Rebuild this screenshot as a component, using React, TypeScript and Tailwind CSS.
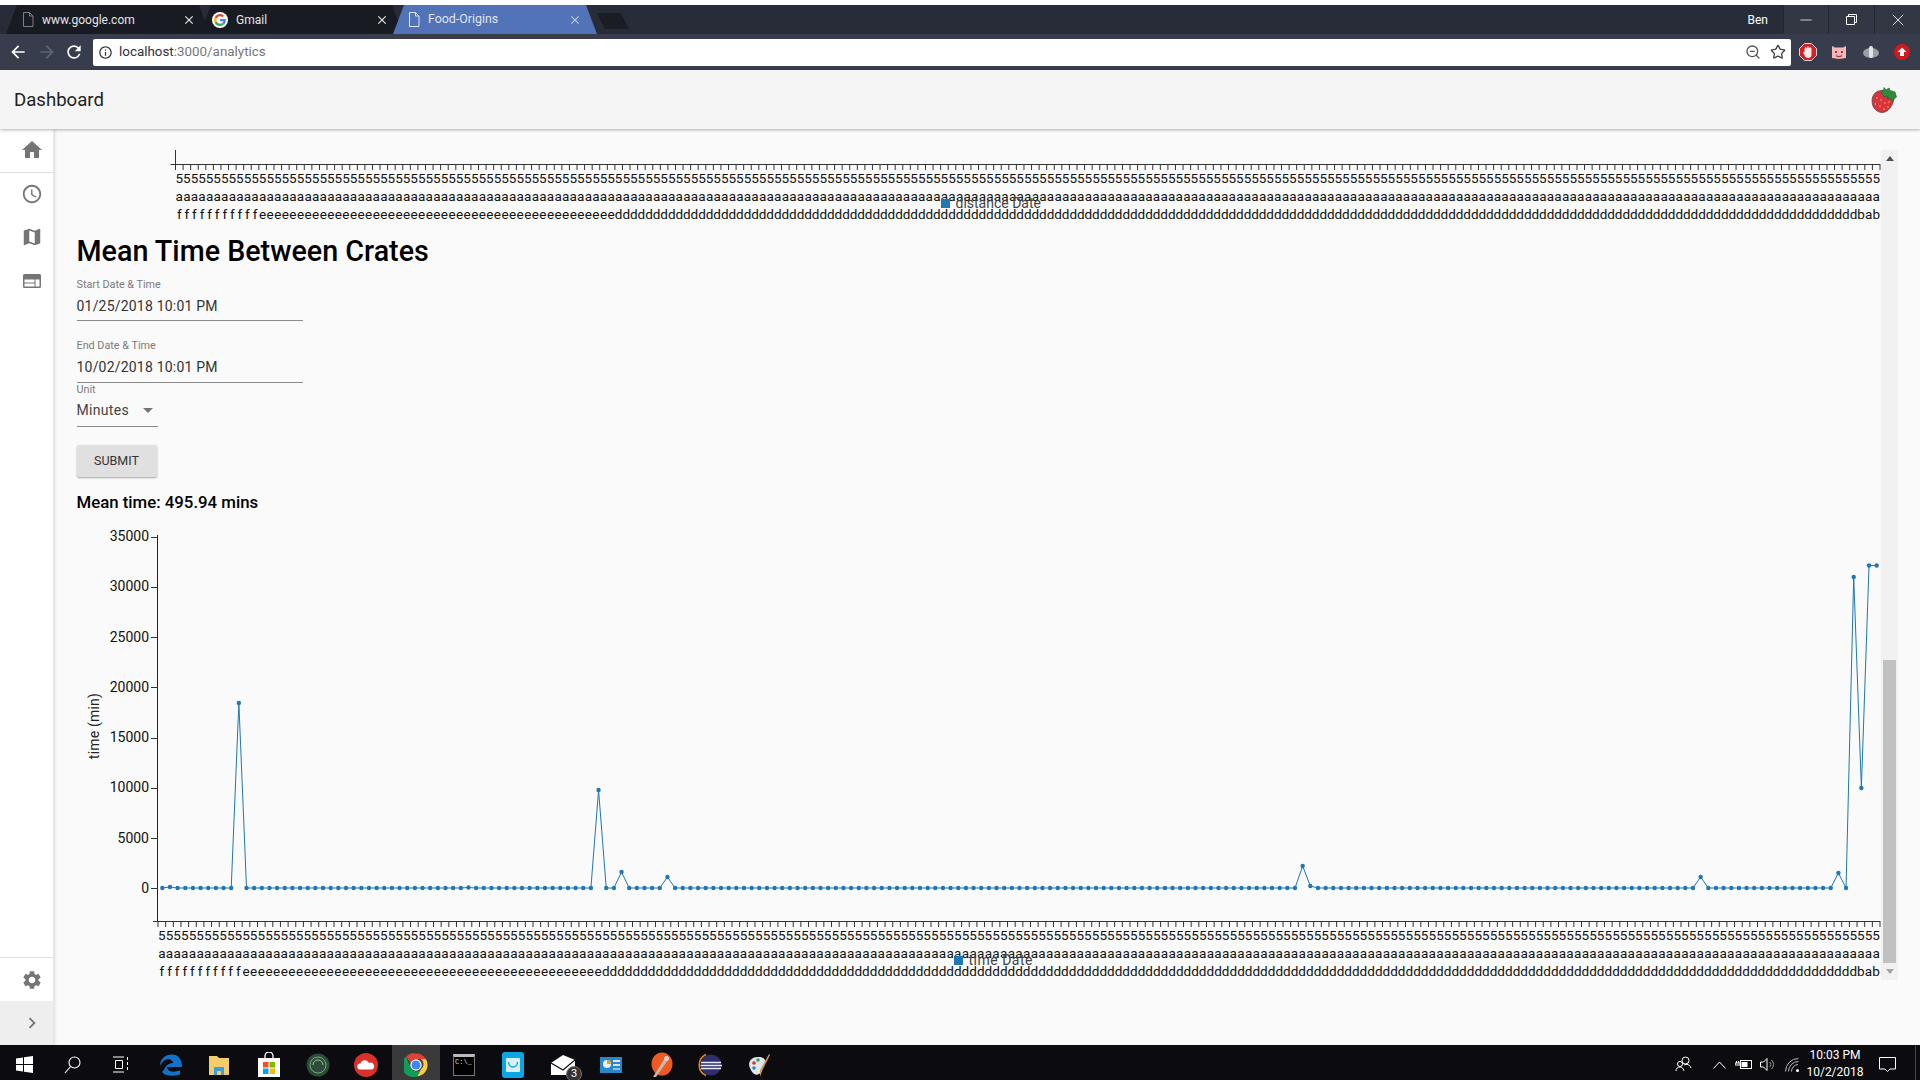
import React from "react";
import { MdHome, MdAccessTime, MdMap, MdSettings, MdChevronRight, MdArrowBack, MdArrowForward, MdRefresh, MdInfoOutline, MdClose } from "react-icons/md";
import { ZoomOut, Star, Minus, X } from "lucide-react";

const N = 225;
const row1 = "5".repeat(N);
const row2 = "a".repeat(N);
const row3 = "f".repeat(11) + "e".repeat(47) + "d".repeat(164) + "bab";

function XAxis({ x0, x1, y }: { x0: number; x1: number; y: number }) {
  const step = (x1 - x0) / N;
  const centers = Array.from({ length: N }, (_, i) => (x0 + step * (i + 0.5)).toFixed(2)).join(" ");
  let ticks = `M${x0 - 5} ${y + 0.5}H${x1}`;
  for (let i = 0; i <= N; i++) ticks += `M${(x0 + step * i).toFixed(2)} ${y}v6`;
  return (
    <g>
      <path d={ticks} stroke="#333" strokeWidth={1} fill="none" />
      <g fontSize={13.5} fill="#111" textAnchor="middle" fontFamily="Roboto, sans-serif">
        <text x={centers} y={y + 19}>{row1}</text>
        <text x={centers} y={y + 37}>{row2}</text>
        <text x={centers} y={y + 55}>{row3}</text>
      </g>
    </g>
  );
}

function Chart1() {
  return (
    <svg className="block w-[1827px] h-[82px] shrink-0" viewBox="54 150 1827 82">
      <path d="M175.5 150V165" stroke="#333" />
      <XAxis x0={175.5} x1={1880} y={164} />
      <rect x={941} y={199} width={9} height={9} fill="#1f77b4" />
      <text x={955.5} y={208} fontSize={14} fill="#444" fontFamily="Roboto, sans-serif">distance Date</text>
    </svg>
  );
}

const special: Record<number, number> = {
  1: 886, 10: 702, 40: 886.5, 57: 789, 60: 871, 66: 876, 149: 865, 150: 885, 201: 876, 219: 872,
  221: 576, 222: 787, 223: 564.5, 224: 564.5,
};

function Chart2() {
  const x0 = 158;
  const x1 = 1880;
  const step = (x1 - x0) / N;
  const pts = Array.from({ length: N }, (_, i) => [x0 + step * (i + 0.5) + 0.5, special[i] ?? 887]);
  const yTicks = [35000, 30000, 25000, 20000, 15000, 10000, 5000, 0];
  return (
    <svg className="block w-[1827px] h-[455px] shrink-0" viewBox="54 525 1827 455">
      <path d={`M157.5 534V921`} stroke="#222" />
      {yTicks.map((v, i) => {
        const y = 535.5 + i * 50.25;
        return (
          <g key={v}>
            <path d={`M151 ${Math.round(y) + 0.5}H158`} stroke="#333" />
            <text x={149} y={y + 4.5} fontSize={14} textAnchor="end" fill="#111" fontFamily="Roboto, sans-serif">{v}</text>
          </g>
        );
      })}
      <text transform="translate(99 725) rotate(-90)" fontSize={14} textAnchor="middle" fill="#222" letterSpacing="0.2" fontFamily="Roboto, sans-serif">time (min)</text>
      <XAxis x0={158} x1={1880} y={920} />
      <polyline points={pts.map((p) => p.join(",")).join(" ")} fill="none" stroke="#1f77b4" strokeWidth={1} />
      {pts.map((p, i) => (
        <circle key={i} cx={p[0]} cy={p[1]} r={2.2} fill="#1f77b4" />
      ))}
      <rect x={954} y={955} width={9} height={9} fill="#1f77b4" />
      <text x={968.5} y={964} fontSize={14} fill="#444" letterSpacing="0.5" fontFamily="Roboto, sans-serif">time Date</text>
    </svg>
  );
}

function DocIcon({ color = "#9aa0ab" }: { color?: string }) {
  return (
    <svg width="12" height="15" viewBox="0 0 12 15" className="shrink-0">
      <path d="M1.5 .5H7.5L11 4V14.5H1.5Z M7.5 .5V4H11" fill="none" stroke={color} />
    </svg>
  );
}

function GoogleG({ size = 16 }: { size?: number }) {
  return (
    <svg width={size} height={size} viewBox="0 0 48 48" className="shrink-0">
      <circle cx="24" cy="24" r="24" fill="#fff" />
      <path fill="#EA4335" d="M24 13c3 0 5.2 1.1 6.8 2.6l5-4.9C32.7 7.9 28.700 6 24 6 17 6 11 10 8 15.900l5.800 4.500C15.200 16 19.200 13 24 13z" />
      <path fill="#4285F4" d="M41.600 24.400c0-1.300-.1-2.300-.3-3.400H24v6.600h10.100c-.4 2.300-1.700 4.300-3.800 5.700l5.700 4.400c3.400-3.100 5.600-7.700 5.600-13.300z" />
      <path fill="#FBBC05" d="M13.800 27.600c-.4-1.100-.6-2.300-.6-3.600s.2-2.500.6-3.600L8 15.900C6.700 18.400 6 21.100 6 24s.7 5.600 2 8.100z" />
      <path fill="#34A853" d="M24 42c4.900 0 9-1.600 12-4.400l-5.700-4.400c-1.600 1.100-3.700 1.800-6.300 1.800-4.800 0-8.800-3-10.200-7.400L8 32.100C11 38 17 42 24 42z" />
    </svg>
  );
}

function Tab({ cls, active, icon, label, closeColor }: { cls: string; active?: boolean; icon: React.ReactNode; label: string; closeColor: string }) {
  return (
    <div
      className={`${cls} h-[29px] shrink-0 flex items-center gap-[8px] [clip-path:polygon(0_100%,11px_0,calc(100%-11px)_0,100%_100%)] ${active ? "bg-[#5273b8] text-[#dfe5f2]" : "bg-[#191b23] text-[#e4e4e6]"}`}
    >
      {icon}
      <span className={`flex-1 leading-none whitespace-nowrap ${active ? "text-[12.4px]" : "text-[12px]"}`}>{label}</span>
      <MdClose size={14} color={closeColor} />
    </div>
  );
}

function Strawberry() {
  return (
    <svg width="28" height="28" viewBox="0 0 28 28">
      <path d="M9 5C4 6 1.500 11 2.200 17 3 23 8 26.500 12 26.500 18 26.500 23 20 24 12 22 6 14 3 9 5Z" fill="#d8333f" stroke="#5b4540" strokeWidth=".8" />
      <path d="M11 6C13 5 14 3 14 1.500L16 4 19 2 20 4.500 25 6 26.500 11 24 13 23 15 20 12 18 13 17 10 14 11Z" fill="#2f8a3a" stroke="#1d5b28" strokeWidth=".6" />
      <g fill="#f5d34e">
        <circle cx="7" cy="12" r=".7" /><circle cx="11" cy="14" r=".7" /><circle cx="5.500" cy="18" r=".7" /><circle cx="10" cy="20" r=".7" />
        <circle cx="15" cy="17" r=".7" /><circle cx="19" cy="16" r=".7" /><circle cx="14" cy="23" r=".7" /><circle cx="18" cy="21" r=".7" />
      </g>
    </svg>
  );
}

function ExtIcons() {
  return (
    <div className="flex items-center w-[129px]">
      <div className="w-[31px] flex justify-center ml-[1px]">
        <svg width="18" height="18" viewBox="0 0 18 18">
          <path d="M5.500 .5H12.500L17.500 5.500V12.500L12.500 17.500H5.500L.5 12.500V5.500Z" fill="#d5202a" stroke="#fff" strokeWidth=".8" />
          <path d="M5.500 7.500C5.500 4 7 3.500 7.500 5.500 8 3 9.500 3 10 5 10.500 3.500 12.500 4 12.500 6V11.500C12.500 14 11 15 9 15 7.500 15 6 14 5.500 12L4 9.500C4.500 8.500 5.500 9 5.500 9.500Z" fill="#f8e9e6" />
        </svg>
      </div>
      <div className="w-[32px] flex justify-center">
        <svg width="16" height="16" viewBox="0 0 16 16">
          <path d="M1 2L4 3.500H12L15 2V14L8 15 1 14Z" fill="#f4b8b8" />
          <path d="M4 7h2v2H4zM10 7h2v2h-2z" fill="#b8323c" />
          <path d="M5 11.500C7 13 9 13 11 11.500" stroke="#b8323c" fill="none" strokeWidth="1.200" />
        </svg>
      </div>
      <div className="w-[32px] flex justify-center">
        <svg width="16" height="14" viewBox="0 0 16 14">
          <ellipse cx="8" cy="8" rx="8" ry="5" fill="#9a9fa8" />
          <rect x="6" y="1" width="4" height="12" rx="2" fill="#e2e4e8" />
        </svg>
      </div>
      <div className="w-[30px] flex justify-center">
        <svg width="16" height="16" viewBox="0 0 16 16">
          <circle cx="8" cy="8" r="8" fill="#d0181f" />
          <path d="M8 3.500L12.500 8H10V12H6V8H3.500Z" fill="#fff" />
        </svg>
      </div>
    </div>
  );
}

function BrowserChrome() {
  return (
    <div className="shrink-0">
      <div className="h-[5px] bg-white" />
      <div className="h-[29px] bg-[#282c38] flex">
        <div className="w-[6px] shrink-0" />
        <Tab cls="w-[204px] pl-[16px] pr-[14px]" icon={<DocIcon color="#7c8088" />} label="www.google.com" closeColor="#e8e8e8" />
        <div className="-ml-[10px]">
          <Tab cls="w-[203px] pl-[12px] pr-[14px]" icon={<GoogleG />} label="Gmail" closeColor="#e8e8e8" />
        </div>
        <div className="-ml-[10px]">
          <Tab cls="w-[204px] pl-[15px] pr-[15px]" active icon={<DocIcon color="#dfe5f2" />} label="Food-Origins" closeColor="#bcc8e2" />
        </div>
        <div className="w-[32px] h-[16px] mt-[8px] bg-[#1b1d25] [clip-path:polygon(0_0,calc(100%-8px)_0,100%_100%,8px_100%)]" />
        <div className="flex-1 flex justify-end items-center pr-[15px] text-white text-[12px]">Ben</div>
        <div className="flex h-full bg-[#333743]">
          <div className="w-[45px] border-l border-[#23262f] flex items-center justify-center"><Minus size={18} strokeWidth={1} color="#fff" /></div>
          <div className="w-[46px] border-l border-[#23262f] flex items-center justify-center">
            <svg width="11" height="11" viewBox="0 0 11 11" fill="none" stroke="#fff"><path d="M.5 2.500H8.500V10.500H.5ZM2.500 2.500V.5H10.500V8.500H8.500" /></svg>
          </div>
          <div className="w-[46px] border-l border-[#23262f] flex items-center justify-center"><X size={20} strokeWidth={1} color="#fff" /></div>
        </div>
      </div>
      <div className="h-[36px] bg-[#373d4c] flex items-center">
        <div className="w-[93px] shrink-0 flex items-center pl-[8px]">
          <MdArrowBack size={20} color="#fff" />
          <MdArrowForward size={20} color="#5e6575" className="ml-[9px]" />
          <MdRefresh size={20} color="#fff" className="ml-[7px]" />
        </div>
        <div className="w-[1698px] h-[27px] bg-white rounded-[2px] flex items-center pl-[5px] pr-[5px] text-[13.400px]">
          <MdInfoOutline size={15} color="#333" />
          <span className="ml-[6px] text-[#333]">localhost</span>
          <span className="text-[#777]">:3000/analytics</span>
          <div className="flex-1" />
          <ZoomOut size={16} color="#555" className="mr-[9px]" />
          <Star size={16} color="#444" />
        </div>
        <ExtIcons />
      </div>
    </div>
  );
}

function SideRow({ children, h }: { children: React.ReactNode; h: string }) {
  return <div className={`${h} flex items-center justify-center pl-[10px] text-[#757575]`}>{children}</div>;
}

function Sidebar() {
  return (
    <div className="w-[54px] shrink-0 bg-white border-r border-[#e6e6e6] shadow-[1px_0_3px_rgba(0,0,0,0.12)] flex flex-col z-10">
      <div className="h-[44px] border-b border-[#e0e0e0] flex items-center justify-center pl-[10px] pb-[2px] text-[#757575]"><MdHome size={24} /></div>
      <SideRow h="h-[42px]"><MdAccessTime size={22} /></SideRow>
      <SideRow h="h-[44px]"><MdMap size={22} /></SideRow>
      <SideRow h="h-[43px]">
        <svg width="18" height="14" viewBox="0 0 18 14"><path fillRule="evenodd" fill="#757575" d="M1.500 0H16.500A1.500 1.500 0 0 1 18 1.500V12.500A1.500 1.500 0 0 1 16.500 14H1.500A1.500 1.500 0 0 1 0 12.500V1.500A1.500 1.500 0 0 1 1.500 0ZM1.500 5.500V8.500H11.500V5.500ZM1.500 9.500V12.500H11.500V9.500ZM12.500 5.500V12.500H16.500V5.500Z" /></svg>
      </SideRow>
      <div className="flex-1" />
      <div className="h-[44px] border-t border-[#e0e0e0] flex items-center justify-center pl-[10px] text-[#757575]"><MdSettings size={22} /></div>
      <div className="h-[44px] bg-[#eeeeee] flex items-center justify-center pl-[10px] text-[#757575]"><MdChevronRight size={22} /></div>
    </div>
  );
}

function Field({ label, value, mt, h }: { label: string; value: string; mt: string; h: string }) {
  return (
    <div className={`w-[226px] ${mt}`}>
      <div className="text-[10.800px] leading-[12px] text-[#7a7a7a]">{label}</div>
      <div className={`${h} pt-[2px] border-b border-[#8a8a8a] text-[14px] tracking-[0.2px] text-[#333] flex items-center`}>{value}</div>
    </div>
  );
}

function Main() {
  return (
    <div className="flex-1 bg-[#fafafa] pt-[21px] flex items-start overflow-hidden">
      <div className="w-[1827px] shrink-0 flex flex-col">
        <Chart1 />
        <div className="pl-[22.500px] flex flex-col items-start">
          <div className="h-[36px] pt-[1px] text-[28.700px] leading-[36px] font-medium text-black">Mean Time Between Crates</div>
          <Field label="Start Date & Time" value="01/25/2018 10:01 PM" mt="mt-[11px]" h="h-[30px]" />
          <Field label="End Date & Time" value="10/02/2018 10:01 PM" mt="mt-[19px]" h="h-[30.500px]" />
          <div className="mt-[1.500px] w-[81px]">
            <div className="text-[10.800px] leading-[12px] text-[#7a7a7a]">Unit</div>
            <div className="h-[31px] pb-[2px] border-b border-[#8a8a8a] text-[14px] tracking-[0.3px] text-[#444] flex items-center justify-between pr-[5px]">
              <span>Minutes</span>
              <svg width="10" height="5" viewBox="0 0 10 5"><path d="M0 0H10L5 5Z" fill="#757575" /></svg>
            </div>
          </div>
          <button className="mt-[18px] w-[80px] h-[32px] bg-[#e0e0e0] rounded-[2px] shadow-[0_1px_2px_rgba(0,0,0,0.35)] text-[12.500px] text-[#333] flex items-center justify-center">SUBMIT</button>
          <div className="mt-[13px] h-[24px] text-[16.800px] leading-[24px] font-medium text-black">Mean time: 495.94 mins</div>
        </div>
        <div className="mt-[12px]"><Chart2 /></div>
      </div>
      <div className="w-[17px] h-[830px] bg-[#f1f1f1] flex flex-col items-center shrink-0">
        <div className="h-[17px] flex items-center justify-center">
          <svg width="8" height="5" viewBox="0 0 8 5"><path d="M0 5H8L4 0Z" fill="#505050" /></svg>
        </div>
        <div className="flex-1" />
        <div className="h-[303px] w-[13px] bg-[#c1c1c1]" />
        <div className="h-[17px] flex items-center justify-center">
          <svg width="8" height="5" viewBox="0 0 8 5"><path d="M0 0H8L4 5Z" fill="#a3a3a3" /></svg>
        </div>
      </div>
    </div>
  );
}

function Slot({ w, active, children }: { w: string; active?: boolean; children: React.ReactNode }) {
  return <div className={`${w} h-full pt-[4px] shrink-0 flex items-center justify-center ${active ? "bg-[#3a3a3a]" : ""}`}>{children}</div>;
}

function Taskbar() {
  return (
    <div className="h-[35px] shrink-0 bg-[#0c0c10] flex items-center text-white">
      <Slot w="w-[48px]">
        <svg width="17" height="17" viewBox="0 0 17 17" fill="#fff"><path d="M0 2.500L7 1.500V8H0ZM8 1.300L17 0V8H8ZM0 9H7V15.500L0 14.500ZM8 9H17V17L8 15.700Z" /></svg>
      </Slot>
      <Slot w="w-[48px]">
        <svg width="17" height="18" viewBox="0 0 17 18" fill="none" stroke="#fff" strokeWidth="1.100"><circle cx="10.500" cy="6.500" r="5.500" /><path d="M6.500 10.500L1 17" /></svg>
      </Slot>
      <Slot w="w-[48px]">
        <svg width="17" height="17" viewBox="0 0 17 17" fill="none" stroke="#fff"><path d="M1 1H12M1 16H12M3.500 4.500H10.500V12.500H3.500ZM15.500 1V4M15.500 6V9M15.500 11V14" /></svg>
      </Slot>
      <div className="w-[3px] shrink-0" />
      <Slot w="w-[48px]">
        <svg width="24" height="24" viewBox="0 0 24 24"><path d="M1 13C1 6 6 1.500 13 1.500 19 1.500 23 6 23 14H8C8.500 19 15 20 21 17V21.500C14 24 6 23 3 19 7 16 5 11 14 10 14 7.500 10 5 6 7 3.500 8.500 2 10.500 1 13Z" fill="#1272c8" /></svg>
      </Slot>
      <Slot w="w-[48px]">
        <svg width="22" height="22" viewBox="0 0 22 22"><path d="M1 2H9L11 4H21V21H1Z" fill="#f2cd6a" /><path d="M6 13H16V21H13V17H9V21H6Z" fill="#3f9ed8" /></svg>
      </Slot>
      <Slot w="w-[52px]">
        <svg width="24" height="26" viewBox="0 0 24 26"><path d="M8 7V4A4 4 0 0 1 16 4V7" stroke="#fff" fill="none" strokeWidth="1.300" /><rect x="1" y="6" width="22" height="19" fill="#fff" /><rect x="6" y="10" width="5.500" height="5.500" fill="#f25022" /><rect x="12.500" y="10" width="5.500" height="5.500" fill="#7fba00" /><rect x="6" y="16.500" width="5.500" height="5.500" fill="#00a4ef" /><rect x="12.500" y="16.500" width="5.500" height="5.500" fill="#ffb900" /></svg>
      </Slot>
      <Slot w="w-[46px]">
        <svg width="24" height="24" viewBox="0 0 24 24" fill="none"><circle cx="12" cy="12" r="11.500" fill="#2e4a3a" /><circle cx="12" cy="12" r="8" stroke="#6fb06e" strokeWidth="1" /><path d="M7 12A5 5 0 0 1 17 12" stroke="#9ad08a" /></svg>
      </Slot>
      <Slot w="w-[50px]">
        <svg width="24" height="24" viewBox="0 0 24 24"><circle cx="12" cy="12" r="12" fill="#d9302a" /><path d="M6 16.500A3 3 0 0 1 6.500 10.500 4.500 4.500 0 0 1 15 10 3.500 3.500 0 0 1 18 16.500Z" fill="#fff" /></svg>
      </Slot>
      <div className="w-[1px] shrink-0" />
      <Slot w="w-[48px]" active>
        <svg width="24" height="24" viewBox="0 0 48 48">
          <path d="M24 1A23 23 0 0 1 44 12.500H24A11.500 11.500 0 0 0 13 20L4 7.500A23 23 0 0 1 24 1Z" fill="#db4437" />
          <path d="M44 12.500A23 23 0 0 1 26 47L35 31A11.500 11.500 0 0 0 33.500 12.500Z" fill="#ffcd40" />
          <path d="M4 7.500A23 23 0 0 0 26 47L35 31 33 33A11.500 11.500 0 0 1 14 30Z" fill="#0f9d58" />
          <circle cx="24" cy="24" r="11.500" fill="#fff" /><circle cx="24" cy="24" r="9" fill="#4285f4" />
        </svg>
      </Slot>
      <Slot w="w-[48px]">
        <div className="w-[22px] h-[22px] bg-black border border-[#777] border-t-[3px] border-t-[#bbb] flex items-start pl-[1px]">
          <span className="text-[7px] leading-[10px] text-[#ddd] font-['Liberation_Mono',monospace]">C:\_</span>
        </div>
      </Slot>
      <Slot w="w-[50px]">
        <svg width="22" height="26" viewBox="0 0 22 26"><rect width="22" height="26" rx="3" fill="#0ea5e4" /><rect x="4" y="6" width="14" height="14" rx="1" fill="#d8f0fb" /><path d="M6.500 10A4.500 5 0 0 0 15.500 10" stroke="#0ea5e4" fill="none" strokeWidth="1.400" /></svg>
      </Slot>
      <Slot w="w-[50px]">
        <div className="relative">
          <svg width="24" height="20" viewBox="0 0 24 20"><path d="M0 8L12 0 24 5V20H0Z" fill="#fff" /><path d="M0 8L12 15 24 5" stroke="#111" strokeWidth="1.300" fill="none" /></svg>
          <div className="absolute -right-[7px] -bottom-[7px] w-[16px] h-[16px] rounded-full bg-[#333] border border-[#777] text-[11px] leading-[14px] text-center">3</div>
        </div>
      </Slot>
      <Slot w="w-[46px]">
        <svg width="22" height="16" viewBox="0 0 22 16"><rect width="22" height="16" fill="#2b88c8" /><circle cx="7" cy="7" r="4" fill="#e8f2fa" /><path d="M7 7V3A4 4 0 0 1 11 7Z" fill="#e8a020" /><rect x="13" y="3" width="7" height="2" fill="#d8ecf8" /><rect x="13" y="7" width="7" height="2" fill="#cde4f4" /><rect x="13" y="11" width="7" height="2" fill="#8ac2e6" /></svg>
      </Slot>
      <Slot w="w-[54px]">
        <svg width="24" height="26" viewBox="0 0 24 26"><ellipse cx="13" cy="12" rx="10.500" ry="11.500" fill="#ee5a24" /><path d="M4 25L16 6 19 8 7 25Z" fill="#c8b8a8" /><circle cx="17.500" cy="6.500" r="2.500" fill="#d8d0c8" /></svg>
      </Slot>
      <Slot w="w-[44px]">
        <svg width="24" height="26" viewBox="0 0 24 26"><circle cx="13" cy="13" r="10.500" fill="#2f2f6e" /><path d="M8 2.500A11.500 11.500 0 0 0 8 23.500" stroke="#e98a1d" fill="none" strokeWidth="1.500" /><path d="M3 10.500H23M2.500 13.500H24M3 16.500H23" stroke="#e8e8f4" strokeWidth="1.600" /></svg>
      </Slot>
      <Slot w="w-[54px]">
        <svg width="24" height="26" viewBox="0 0 24 26"><path d="M3 16C0 10 5 4 12 5 18 5 20 10 17 13 14 15 17 20 12 22 8 24 5 21 3 16Z" fill="#dfe7ee" /><circle cx="7" cy="11" r="1.800" fill="#d9302a" /><circle cx="11" cy="8" r="1.800" fill="#3fa04a" /><circle cx="7" cy="16" r="1.800" fill="#2b88c8" /><path d="M13 18L22 2 23 3 15 19 13 25Z" fill="#c99a4a" /></svg>
      </Slot>
      <div className="flex-1" />
      <Slot w="w-[36px]">
        <svg width="17" height="17" viewBox="0 0 17 17" fill="none" stroke="#fff"><circle cx="10.500" cy="4.500" r="3.500" /><circle cx="5" cy="8" r="2.500" /><path d="M1 15C1 12.500 2.500 11 5 11 7 11 8.500 12.500 9 15M9 9C11.500 7.500 15 8.500 16 12" /></svg>
      </Slot>
      <div className="w-[6px] shrink-0" />
      <Slot w="w-[24px]">
        <svg width="13" height="8" viewBox="0 0 13 8" fill="none" stroke="#fff"><path d="M.5 7.500L6.500 1 12.500 7.500" /></svg>
      </Slot>
      <Slot w="w-[24px]">
        <svg width="17" height="11" viewBox="0 0 17 11"><rect x="5.500" y="1.500" width="11" height="8" fill="none" stroke="#fff" /><rect x="6.500" y="3" width="6" height="5" fill="#fff" /><path d="M0 4H5V6H0ZM1.500 2V4M3.500 2V4" stroke="#fff" fill="none" /></svg>
      </Slot>
      <Slot w="w-[26px]">
        <svg width="17" height="15" viewBox="0 0 17 15" fill="none" stroke="#fff"><path d="M.5 5H3.500L7 1.500V13.500L3.500 10H.5Z" /><path d="M9.500 5A3 3 0 0 1 9.500 10M11.500 3A6 6 0 0 1 11.500 12" stroke="#999" /></svg>
      </Slot>
      <Slot w="w-[22px]">
        <svg width="15" height="14" viewBox="0 0 15 14" fill="none" stroke="#bbb"><path d="M.5 13.500A13 13 0 0 1 13.500 .5M3.500 13.500A10 10 0 0 1 13.500 3.500M6.500 13.500A7 7 0 0 1 13 6.500" /><circle cx="12.500" cy="12.500" r="1.500" fill="#fff" stroke="none" /></svg>
      </Slot>
      <div className="w-[64px] h-full pt-[2px] shrink-0 flex flex-col justify-center text-center text-[12px] leading-[17px] text-white">
        <div>10:03 PM</div>
        <div>10/2/2018</div>
      </div>
      <div className="w-[6px] shrink-0" />
      <Slot w="w-[28px]">
        <svg width="17" height="17" viewBox="0 0 17 17" fill="none" stroke="#fff"><path d="M.5 1.500H16.500V13H11L8.500 15.500 6 13H.5Z" /></svg>
      </Slot>
      <div className="w-[15px] h-full shrink-0 border-r border-[#444]" />
      <div className="w-[4px] shrink-0" />
    </div>
  );
}

export default function App() {
  return (
    <div className="w-[1920px] h-[1080px] flex flex-col overflow-hidden font-['Roboto',sans-serif]">
      <BrowserChrome />
      <div className="h-[59px] shrink-0 bg-[#f5f5f5] shadow-[0_1px_3px_rgba(0,0,0,0.3)] flex items-center justify-between pl-[14px] pr-[22px] z-20">
        <div className="pt-[2px] text-[18.600px] text-[#222]">Dashboard</div>
        <Strawberry />
      </div>
      <div className="flex-1 flex min-h-0">
        <Sidebar />
        <Main />
      </div>
      <Taskbar />
    </div>
  );
}
